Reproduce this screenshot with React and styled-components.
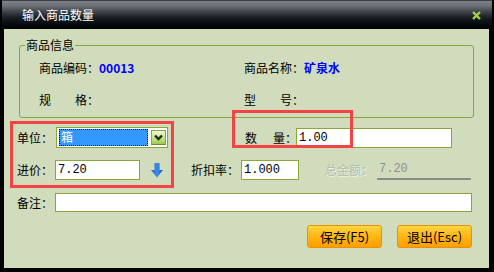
import React from 'react'
import styled, { createGlobalStyle } from 'styled-components'

const Global = createGlobalStyle`
  html, body { margin: 0; padding: 0; background: #000; }
  body {
    font-family: "Noto Sans CJK SC", "Liberation Sans", sans-serif;
    font-size: 12px;
    color: #000;
  }
`

const Window = styled.div`
  width: 494px;
  height: 272px;
  box-sizing: border-box;
  background: #000;
  display: flex;
  flex-direction: column;
`

const TitleBar = styled.div`
  height: 29px;
  flex: none;
  margin: 0 2px;
  box-sizing: border-box;
  border-top: 1px solid #3a3f44;
  background: linear-gradient(#7c8287 0, #6a7075 5px, #3c4247 11px, #171c21 17px, #05080b 24px, #000 29px);
  display: flex;
  align-items: center;
  justify-content: space-between;
  padding: 0 11px 0 20px;
`

const Title = styled.span`
  color: #fff;
  font-size: 12px;
  line-height: 14px;
`

const Body = styled.div`
  position: relative;
  flex: 1;
  margin: 0 5px 4px 4px;
  background: #d0dcbc;
  display: flex;
  flex-direction: column;
  padding-left: 13px;
`

const Group = styled.fieldset`
  margin: 9px 0 0 2px;
  width: 455px;
  height: 80px;
  box-sizing: border-box;
  padding: 8px 0 0 19px;
  border: 1px solid #8aa63c;
  border-radius: 3px;
  display: grid;
  grid-template-columns: 205px 1fr;
  grid-auto-rows: 16px;
  row-gap: 16px;
  align-content: start;
`

const Legend = styled.legend`
  margin-left: -14px;
  padding: 0 1px;
  line-height: 14px;
  font-size: 12px;
`

const Info = styled.div`
  display: flex;
  align-items: center;
  line-height: 16px;
  white-space: nowrap;
`

const Value = styled.span`
  color: #0000ff;
  font-weight: bold;
`

const Gap = styled.span`
  display: inline-block;
  width: ${p => p.$w}px;
`

const Row = styled.div`
  display: flex;
  align-items: center;
  height: ${p => p.$h}px;
  margin-top: ${p => p.$mt}px;
`

const Label = styled.span`
  flex: none;
  width: ${p => p.$w}px;
  margin-left: ${p => p.$ml || 0}px;
  white-space: nowrap;
  line-height: 16px;
  color: ${p => (p.$disabled ? '#b3bba9' : '#000')};
  text-shadow: ${p => (p.$disabled ? '1px 1px 0 #eef3e6' : 'none')};
`

const Input = styled.div`
  flex: none;
  box-sizing: border-box;
  width: ${p => p.$w}px;
  height: ${p => p.$h || 20}px;
  margin-left: ${p => p.$ml || 0}px;
  background: #fff;
  border: 1px solid #8aa63c;
  font-family: "Liberation Mono", "DejaVu Sans Mono", monospace;
  font-size: 12px;
  line-height: 18px;
  padding-left: 2px;
`

const Select = styled.div`
  flex: none;
  box-sizing: border-box;
  width: 112px;
  height: 21px;
  background: #fff;
  border: 1px solid #8aa63c;
  display: flex;
  align-items: center;
  padding: 0 1px 0 2px;
`

const Selected = styled.div`
  flex: 1;
  height: 17px;
  box-sizing: border-box;
  background: #3399ff;
  outline: 1px dotted #000;
  outline-offset: -1px;
  color: #fff;
  line-height: 16px;
  padding-left: 2px;
`

const DropButton = styled.div`
  flex: none;
  width: 15px;
  height: 15px;
  margin-left: 3px;
  box-sizing: border-box;
  border: 1px solid #8aa63c;
  border-bottom-color: #6f8c2a;
  background: linear-gradient(#eef7d8, #c6e28a 55%, #9ccb4c);
  display: flex;
  align-items: center;
  justify-content: center;
`

const Total = styled.div`
  flex: none;
  width: 94px;
  height: 19px;
  box-sizing: border-box;
  border-bottom: 2px solid #8c8c8c;
  color: #8f8f8f;
  font-family: "Liberation Mono", "DejaVu Sans Mono", monospace;
  padding-left: 2px;
  line-height: 17px;
`

const ArrowWrap = styled.span`
  display: flex;
  margin-left: 11px;
`

const Buttons = styled.div`
  display: flex;
  justify-content: flex-end;
  gap: 15px;
  margin-top: 13px;
  padding-right: 17px;
`

const Button = styled.button`
  width: 75px;
  height: 23px;
  box-sizing: border-box;
  border: 1px solid #e99300;
  border-radius: 3px;
  background: linear-gradient(#ffd540, #ffb818 45%, #ff9e00);
  font-family: "Noto Sans CJK SC", "Liberation Sans", sans-serif;
  font-size: 13px;
  color: #000;
  padding: 0;
  line-height: 20px;
`

const RedBox = styled.div`
  position: absolute;
  left: ${p => p.$x}px;
  top: ${p => p.$y}px;
  width: ${p => p.$w}px;
  height: ${p => p.$h}px;
  box-sizing: border-box;
  border: 3px solid #f24444;
  pointer-events: none;
`

const CloseIcon = () => (
  <svg width="9" height="9" viewBox="0 0 9 9">
    <path d="M1 1 L8 8 M8 1 L1 8" stroke="#a8d444" strokeWidth="2.4" />
  </svg>
)

const Chevron = () => (
  <svg width="9" height="7" viewBox="0 0 9 7">
    <polyline points="1,1.5 4.5,5 8,1.5" fill="none" stroke="#1f2a0c" strokeWidth="2.4" />
  </svg>
)

const DownArrow = () => (
  <svg width="12" height="15" viewBox="0 0 12 15">
    <defs>
      <linearGradient id="ar" x1="0" y1="0" x2="1" y2="0">
        <stop offset="0" stopColor="#1b63c6" />
        <stop offset="0.5" stopColor="#3b8ee6" />
        <stop offset="1" stopColor="#1556b0" />
      </linearGradient>
    </defs>
    <path d="M3.5 0 H8.5 V7 H12 L6 14.5 L0 7 H3.5 Z" fill="url(#ar)" />
  </svg>
)

export default function App() {
  return (
    <>
      <Global />
      <Window>
        <TitleBar>
          <Title>输入商品数量</Title>
          <CloseIcon />
        </TitleBar>
        <Body>
          <Group>
            <Legend>商品信息</Legend>
            <Info>商品编码：<Value>00013</Value></Info>
            <Info>商品名称：<Value>矿泉水</Value></Info>
            <Info>规<Gap $w={24} />格：</Info>
            <Info>型<Gap $w={24} />号：</Info>
          </Group>

          <Row $h={21} $mt={9}>
            <Label $w={39}>单位：</Label>
            <Select>
              <Selected>箱</Selected>
              <DropButton><Chevron /></DropButton>
            </Select>
            <Label $w={51} $ml={77}>数<Gap $w={16} />量：</Label>
            <Input $w={156}>1.00</Input>
          </Row>

          <Row $h={20} $mt={12}>
            <Label $w={38}>进价：</Label>
            <Input $w={85}>7.20</Input>
            <ArrowWrap><DownArrow /></ArrowWrap>
            <Label $w={50} $ml={28}>折扣率：</Label>
            <Input $w={58}>1.000</Input>
            <Label $w={52} $ml={26} $disabled>总金额：</Label>
            <Total>7.20</Total>
          </Row>

          <Row $h={19} $mt={13}>
            <Label $w={38}>备注：</Label>
            <Input $w={417} $h={19} />
          </Row>

          <Buttons>
            <Button>保存(F5)</Button>
            <Button>退出(Esc)</Button>
          </Buttons>

          <RedBox $x={6} $y={92} $w={164} $h={67} />
          <RedBox $x={228} $y={81} $w={121} $h={38} />
        </Body>
      </Window>
    </>
  )
}
